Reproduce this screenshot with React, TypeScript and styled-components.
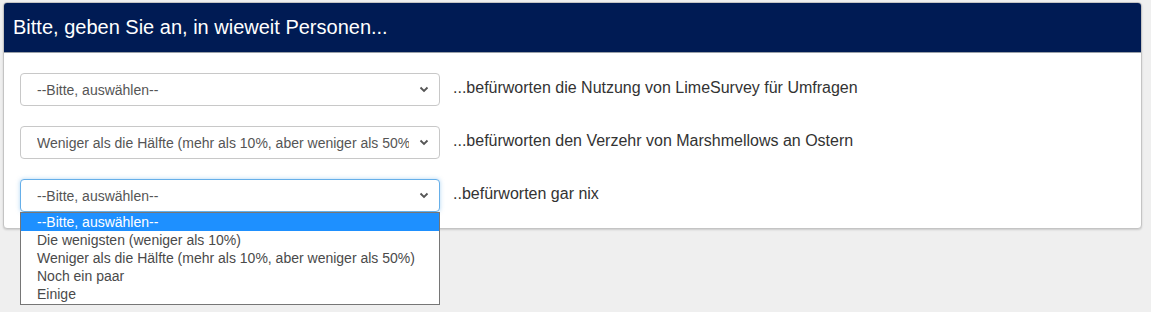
import styled, { createGlobalStyle } from "styled-components";

const GlobalStyle = createGlobalStyle`
  html, body {
    margin: 0;
    padding: 0;
    background: #efefef;
    font-family: "Liberation Sans", Arial, sans-serif;
  }
`;

interface Question {
  id: number;
  value: string;
  label: string;
  open?: boolean;
}

const options = [
  "--Bitte, auswählen--",
  "Die wenigsten (weniger als 10%)",
  "Weniger als die Hälfte (mehr als 10%, aber weniger als 50%)",
  "Noch ein paar",
  "Einige",
];

const questions: Question[] = [
  { id: 1, value: options[0], label: "...befürworten die Nutzung von LimeSurvey für Umfragen" },
  { id: 2, value: options[2], label: "...befürworten den Verzehr von Marshmellows an Ostern" },
  { id: 3, value: options[0], label: "..befürworten gar nix", open: true },
];

const Page = styled.div`
  padding: 2px 9px 83px 3px;
`;

const Panel = styled.section`
  background: #fff;
  border: 1px solid #c4c4c4;
  border-radius: 4px;
  box-shadow: 0 1px 2px rgba(0, 0, 0, 0.15);
`;

const Header = styled.header`
  background: #001b54;
  color: #fff;
  font-size: 20px;
  line-height: 22px;
  padding: 13px 9px 14px;
  border-radius: 3px 3px 0 0;
  border-bottom: 1px solid #9aa0a8;
`;

const Body = styled.div`
  display: flex;
  flex-direction: column;
  gap: 20px;
  padding: 20px 16px 16px;
`;

const Row = styled.div`
  display: grid;
  grid-template-columns: 420px 1fr;
  column-gap: 13px;
  align-items: center;
`;

const SelectWrap = styled.div`
  position: relative;
`;

const SelectBox = styled.div<{ $focused?: boolean }>`
  box-sizing: border-box;
  height: 33px;
  display: flex;
  align-items: center;
  padding: 0 10px 0 16px;
  border: 1px solid ${(p) => (p.$focused ? "#66afe9" : "#c8c8c8")};
  border-radius: 4px;
  background: #fff;
  box-shadow: ${(p) =>
    p.$focused ? "0 0 4px rgba(102, 175, 233, 0.5)" : "none"};
  color: #555;
  font-size: 14px;
`;

const SelectValue = styled.span`
  flex: 1;
  overflow: hidden;
  white-space: nowrap;
`;

const Chevron = styled.svg`
  flex: none;
  margin-left: 10px;
`;

const Label = styled.div`
  color: #333;
  font-size: 16px;
  line-height: 20px;
  margin-top: -3px;
`;

const Dropdown = styled.ul`
  position: absolute;
  left: 0;
  top: 100%;
  width: 420px;
  box-sizing: border-box;
  margin: 0;
  padding: 0 0 1px;
  list-style: none;
  background: #fff;
  border: 1px solid #767676;
  font-size: 14px;
`;

const Option = styled.li<{ $active?: boolean }>`
  height: 18px;
  line-height: 18px;
  padding-left: 16px;
  white-space: nowrap;
  background: ${(p) => (p.$active ? "#1e90ff" : "transparent")};
  color: ${(p) => (p.$active ? "#fff" : "#4a4a4a")};
`;

function Select({ value, open }: { value: string; open?: boolean }) {
  return (
    <SelectWrap>
      <SelectBox $focused={open}>
        <SelectValue>{value}</SelectValue>
        <Chevron width="10" height="7" viewBox="0 0 10 7">
          <path
            d="M1.5 1.5 L5 5 L8.5 1.5"
            fill="none"
            stroke="#555"
            strokeWidth="1.8"
          />
        </Chevron>
      </SelectBox>
      {open && (
        <Dropdown>
          {options.map((o, i) => (
            <Option key={o} $active={i === 0}>
              {o}
            </Option>
          ))}
        </Dropdown>
      )}
    </SelectWrap>
  );
}

export default function App() {
  return (
    <Page>
      <GlobalStyle />
      <Panel>
        <Header>Bitte, geben Sie an, in wieweit Personen...</Header>
        <Body>
          {questions.map((q) => (
            <Row key={q.id}>
              <Select value={q.value} open={q.open} />
              <Label>{q.label}</Label>
            </Row>
          ))}
        </Body>
      </Panel>
    </Page>
  );
}
